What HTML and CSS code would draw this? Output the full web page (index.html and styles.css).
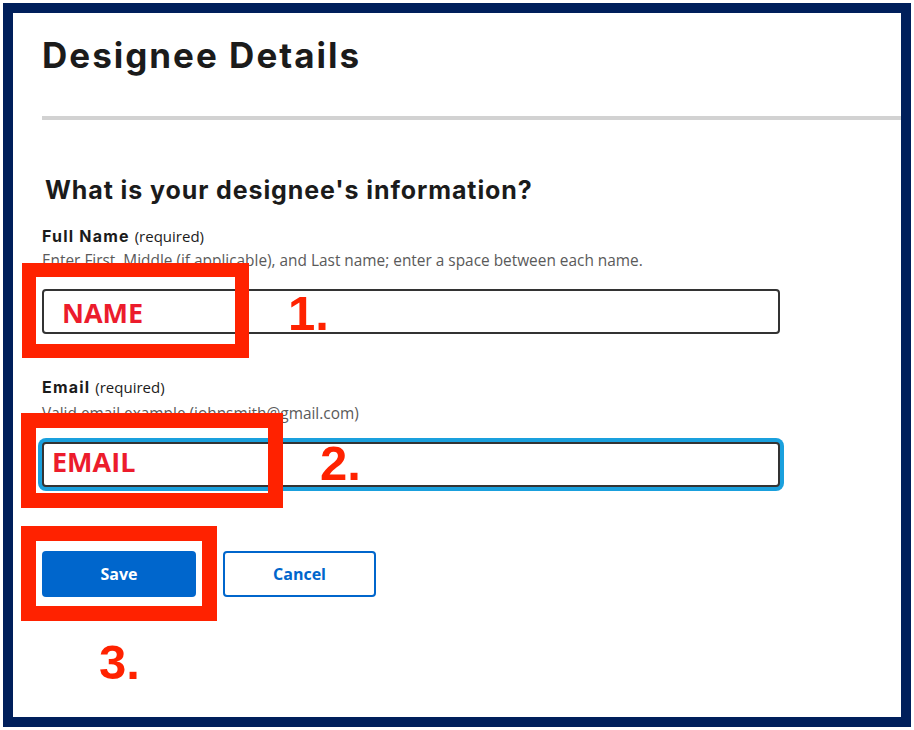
FILE: index.html
```html
<!DOCTYPE html>
<html lang="en">
<head>
    <meta charset="UTF-8">
    <title>Designee Details</title>
    <link rel="stylesheet" href="styles.css">
</head>
<body>
    <div class="frame">
        <h1 class="title">Designee Details</h1>
        <div class="rule"></div>

        <form class="form">
            <h2 class="question">What is your designee's information?</h2>

            <div class="field">
                <label class="label" for="fullname">Full Name <span class="req">(required)</span></label>
                <p class="hint">Enter First, Middle (if applicable), and Last name; enter a space between each name.</p>
                <input class="input" id="fullname" type="text">
            </div>

            <div class="field">
                <label class="label" for="email">Email <span class="req">(required)</span></label>
                <p class="hint">Valid email example (johnsmith@gmail.com)</p>
                <input class="input focused" id="email" type="text">
            </div>

            <div class="actions">
                <button type="button" class="btn btn-primary">Save</button>
                <button type="button" class="btn btn-outline">Cancel</button>
            </div>
        </form>

        <!-- annotations drawn over the form -->
        <div class="mark mark-name"></div>
        <div class="mark mark-email"></div>
        <div class="mark mark-save"></div>
        <span class="tag tag-name">NAME</span>
        <span class="tag tag-email">EMAIL</span>
        <span class="step step-1">1.</span>
        <span class="step step-2">2.</span>
        <span class="step step-3">3.</span>
    </div>
</body>
</html>
```

FILE: styles.css
```css
* {
    margin: 0;
    padding: 0;
    box-sizing: border-box;
}
body {
    background: #fff;
    font-family: "Open Sans", "Liberation Sans", sans-serif;
    color: #1b1b1b;
}
.frame {
    margin: 3px;
    width: 908px;
    height: 724px;
    border: 10px solid #001f5b;
    padding: 0 0 0 29px;
    position: relative;
}
.title {
    font-family: Inter, "Open Sans", sans-serif;
    font-weight: 700;
    font-size: 35px;
    line-height: 40px;
    letter-spacing: 2px;
    padding-top: 22px;
    color: #1b1b1b;
}
.rule {
    height: 4px;
    background: #d2d2d2;
    margin-top: 41px;
}
.form {
    padding-top: 55px;
}
.question {
    font-family: Inter, "Open Sans", sans-serif;
    font-weight: 700;
    font-size: 25px;
    line-height: 30px;
    letter-spacing: 0.9px;
    margin-left: 3px;
}
.field {
    margin-top: 21px;
}
.field + .field {
    margin-top: 43px;
}
.label {
    display: block;
    font-family: Inter, "Open Sans", sans-serif;
    font-weight: 700;
    font-size: 16px;
    line-height: 20px;
    letter-spacing: 1.2px;
}
.req {
    font-family: "Open Sans", sans-serif;
    font-weight: 400;
    font-size: 15px;
    line-height: 20px;
    letter-spacing: 0;
}
.hint {
    font-size: 15.4px;
    line-height: 20px;
    color: #5a5a5a;
    margin-top: 5px;
}
.field + .field .hint {
    margin-top: 7px;
}
.input {
    display: block;
    width: 738px;
    height: 45px;
    margin-top: 18px;
    border: 2px solid #333;
    border-radius: 4px;
    background: #fff;
    outline: none;
}
.input.focused {
    box-shadow: 0 0 0 4px #1aa0dd;
}
.actions {
    display: flex;
    gap: 27px;
    margin-top: 64px;
}
.btn {
    width: 154px;
    height: 46px;
    border-radius: 4px;
    font-family: "Open Sans", sans-serif;
    font-weight: 700;
    font-size: 16px;
}
.btn-primary {
    background: #0066cc;
    border: none;
    color: #fff;
}
.btn-outline {
    background: #fff;
    border: 2px solid #0066cc;
    color: #0066cc;
    width: 153px;
}

/* red annotation boxes */
.mark {
    position: absolute;
    height: 95px;
    border: 14px solid #ff2200;
}
.mark-name {
    left: 9px;
    top: 250px;
    width: 227px;
}
.mark-email {
    left: 8px;
    top: 400px;
    width: 262px;
    border-width: 15px;
}
.mark-save {
    left: 8px;
    top: 513px;
    width: 196px;
    border-width: 15px;
}
.tag {
    position: absolute;
    font-family: "Open Sans", sans-serif;
    font-weight: 700;
    font-size: 27px;
    line-height: 1;
    color: #ec1c2c;
}
.tag-name {
    left: 49px;
    top: 286px;
}
.tag-email {
    left: 39px;
    top: 435px;
}
.step {
    position: absolute;
    font-family: "Liberation Sans", Arial, sans-serif;
    font-weight: 700;
    font-size: 49px;
    line-height: 1;
    color: #ff2200;
}
.step-1 {
    left: 275px;
    top: 276px;
}
.step-2 {
    left: 307px;
    top: 426px;
}
.step-3 {
    left: 86px;
    top: 625px;
}
```
